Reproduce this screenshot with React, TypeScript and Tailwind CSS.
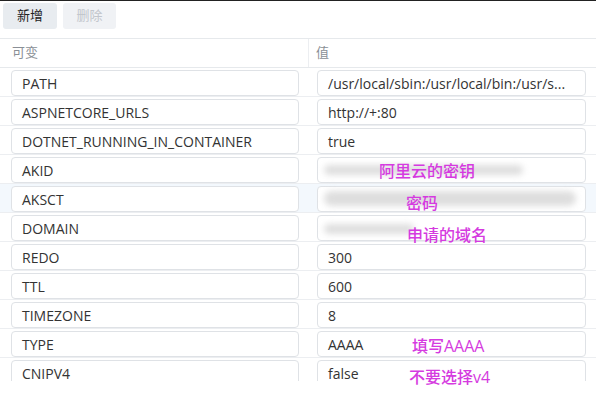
import React from "react";

type Row = {
  name: string;
  value: string;
  blur?: { left: number; top: number; width: number; height: number };
  note?: { text: string; left: number; top: number };
  active?: boolean;
};

const rows: Row[] = [
  { name: "PATH", value: "/usr/local/sbin:/usr/local/bin:/usr/s..." },
  { name: "ASPNETCORE_URLS", value: "http://+:80" },
  { name: "DOTNET_RUNNING_IN_CONTAINER", value: "true" },
  {
    name: "AKID",
    value: "",
    blur: { left: 15, top: 10, width: 199, height: 10 },
    note: { text: "阿里云的密钥", left: 70, top: 8 },
  },
  {
    name: "AKSCT",
    value: "",
    active: true,
    blur: { left: 15, top: 7, width: 252, height: 15 },
    note: { text: "密码", left: 97, top: 11 },
  },
  {
    name: "DOMAIN",
    value: "",
    blur: { left: 15, top: 11, width: 90, height: 10 },
    note: { text: "申请的域名", left: 98, top: 14 },
  },
  { name: "REDO", value: "300" },
  { name: "TTL", value: "600" },
  { name: "TIMEZONE", value: "8" },
  { name: "TYPE", value: "AAAA", note: { text: "填写AAAA", left: 103, top: 9 } },
  { name: "CNIPV4", value: "false", note: { text: "不要选择v4", left: 100, top: 11 } },
];

const font = { fontFamily: '"Open Sans", "Noto Sans CJK SC", sans-serif' };

function Field({ text }: { text: string }) {
  return (
    <div className="h-[26px] rounded-[4px] border border-[#dfe2e6] bg-white pl-[10px] flex items-center text-[14px] text-[#333] whitespace-nowrap overflow-hidden">
      {text}
    </div>
  );
}

function TableRow({ row, last }: { row: Row; last: boolean }) {
  return (
    <div className={`relative ${last ? "h-[23px]" : "h-[29px] border-b border-[#eceef1]"} ${row.active ? "bg-[#f3f8fd]" : ""}`}>
      <div className={`grid grid-cols-[309px_1fr] ${last ? "h-[23px] overflow-hidden" : "h-full"}`}>
        <div className="pl-[11px] pr-[10px] pt-[2px]">
          <Field text={row.name} />
        </div>
        <div className="pl-[8px] pr-[10px] pt-[2px]">
          <Field text={row.value} />
        </div>
      </div>
      {row.blur && (
        <div
          className="absolute bg-[#dedede] blur-[3px] rounded-full"
          style={{ left: 309 + row.blur.left, top: row.blur.top, width: row.blur.width, height: row.blur.height }}
        />
      )}
      {row.note && (
        <div
          className="absolute text-[16px] leading-none font-medium text-[#d53ae0] whitespace-nowrap"
          style={{ left: 309 + row.note.left, top: row.note.top }}
        >
          {row.note.text}
        </div>
      )}
    </div>
  );
}

export default function App() {
  return (
    <div className="w-[596px] h-[407px] overflow-hidden bg-white border-t border-[#222]" style={font}>
      <div className="h-[37px] flex items-start gap-[6px] pl-[3px] pt-[2px]">
        <button className="h-[26px] w-[54px] rounded-[3px] bg-[#e8ecf0] text-[13px] text-[#222]">新增</button>
        <button className="h-[26px] w-[53px] rounded-[3px] bg-[#f0f2f5] text-[13px] text-[#c2c6cc]" disabled>
          删除
        </button>
      </div>
      <div className="border-t border-[#e6e9ec]">
        <div className="grid grid-cols-[309px_1fr] h-[29px] border-b border-[#e6e9ec] text-[13px] text-[#8a8f96]">
          <div className="pl-[12px] flex items-center border-r border-[#eceef1]">可变</div>
          <div className="pl-[7px] flex items-center">值</div>
        </div>
        {rows.map((row, i) => (
          <TableRow key={row.name} row={row} last={i === rows.length - 1} />
        ))}
      </div>
    </div>
  );
}
